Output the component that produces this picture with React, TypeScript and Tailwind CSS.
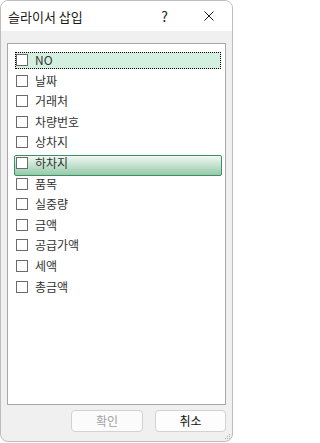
const items = ['NO', '날짜', '거래처', '차량번호', '상차지', '하차지', '품목', '실중량', '금액', '공급가액', '세액', '총금액'];

function Checkbox() {
  return <div className="w-[12px] h-[12px] shrink-0 border border-[#6b6b6b] bg-white" />;
}

export default function App() {
  return (
    <div
      className="w-[233px] h-[442px] flex flex-col bg-[#f0f0f0] rounded-[8px] border border-[#bdbdbd] overflow-hidden relative"
      style={{ fontFamily: '"Noto Sans CJK KR", "Noto Sans", sans-serif' }}
    >
      {/* title bar */}
      <div className="h-[30px] shrink-0 bg-white flex items-center pl-[7px]">
        <span className="text-[13px] text-[#1a1a1a] leading-none">슬라이서 삽입</span>
        <span className="ml-auto mr-[36px] text-[14px] text-[#1a1a1a] leading-none">?</span>
        <svg width="10" height="10" viewBox="0 0 10 10" className="mr-[18px]">
          <path d="M0.5 0.5 L9.5 9.5 M9.5 0.5 L0.5 9.5" stroke="#1a1a1a" strokeWidth="1" />
        </svg>
      </div>

      {/* body */}
      <div className="flex-1 flex flex-col px-[6px] pt-[12px]">
        <div className="h-[362px] w-[219px] border border-[#a8a8a8] bg-white pt-[5.7px]">
          {items.map((label) => (
            <div key={label} className="relative h-[20.6px] ml-[6px] mr-[3px] flex items-center">
              {label === 'NO' && (
                <div className="absolute left-[1px] right-[1px] top-[2px] bottom-[1px] border border-dotted border-black bg-[#d4efe0]" />
              )}
              {label === '하차지' && (
                <div className="absolute left-0 right-0 top-[2px] bottom-[-3px] rounded-[2px] border border-[#3f8d62] bg-gradient-to-b from-[#f1f9f4] to-[#94c9a9]" />
              )}
              <div className="relative flex items-center pl-[2px] gap-[7px]">
                <Checkbox />
                <span className="text-[12px] leading-none text-[#333333]">{label}</span>
              </div>
            </div>
          ))}
        </div>

        <div className="flex justify-end gap-[12px] mt-[5px] pr-[0px]">
          <button className="w-[72px] h-[22px] rounded-[4px] border border-[#d2d2d2] bg-[#fbfbfb] text-[12px] text-[#a3a3a3] leading-none">
            확인
          </button>
          <button className="w-[71px] h-[22px] rounded-[4px] border border-[#d2d2d2] bg-[#fdfdfd] text-[12px] text-[#111111] leading-none">
            취소
          </button>
        </div>
      </div>

      {/* resize grip */}
      <svg width="7" height="7" viewBox="0 0 7 7" className="absolute right-[1px] bottom-[1px]">
        <rect x="5" y="1" width="1" height="1" fill="#b0b0b0" />
        <rect x="3" y="3" width="1" height="1" fill="#b0b0b0" />
        <rect x="5" y="3" width="1" height="1" fill="#b0b0b0" />
        <rect x="1" y="5" width="1" height="1" fill="#b0b0b0" />
        <rect x="3" y="5" width="1" height="1" fill="#b0b0b0" />
        <rect x="5" y="5" width="1" height="1" fill="#b0b0b0" />
      </svg>
    </div>
  );
}
